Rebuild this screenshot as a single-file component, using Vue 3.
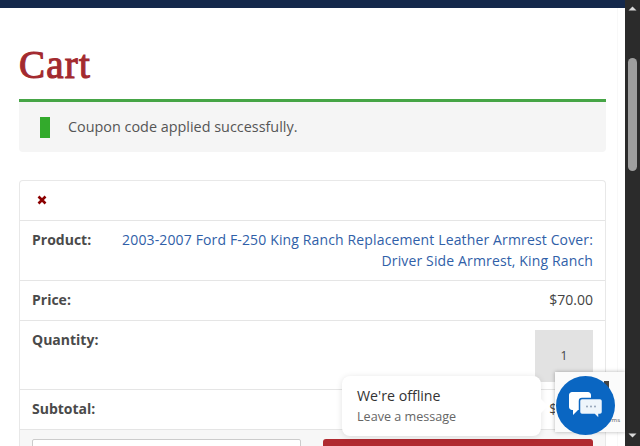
<script setup>
const rows = [
  { label: 'Price:', value: '$70.00' },
]
</script>

<template>
  <div class="page">
    <div class="main">
      <div class="topbar"></div>
      <div class="content">
        <h1 class="title">Cart</h1>
        <div class="notice">
          <span class="notice-icon"></span>
          <span class="notice-text">Coupon code applied successfully.</span>
        </div>
        <div class="table">
          <div class="row row-remove">
            <svg width="10" height="10" viewBox="0 0 10 10"><path d="M1.5 1.5 8.5 8.5M8.5 1.5 1.5 8.5" stroke="#8b0000" stroke-width="2.6" fill="none"/></svg>
          </div>
          <div class="row row-product">
            <strong>Product:</strong>
            <a class="link">2003-2007 Ford F-250 King Ranch Replacement Leather Armrest Cover: Driver Side Armrest, King Ranch</a>
          </div>
          <div v-for="r in rows" :key="r.label" class="row row-std">
            <strong>{{ r.label }}</strong>
            <span>{{ r.value }}</span>
          </div>
          <div class="row row-qty">
            <strong>Quantity:</strong>
            <div class="qty">1</div>
          </div>
          <div class="row row-std">
            <strong>Subtotal:</strong>
            <span>$70.00</span>
          </div>
          <div class="row row-coupon">
            <div class="coupon-input"></div>
            <div class="coupon-btn"></div>
          </div>
        </div>
      </div>
    </div>
    <div class="scrollbar">
      <svg class="arrow" width="15" height="8" viewBox="0 0 15 8"><path d="M3.5 6.5 7.5 2.5 11.5 6.5Z" fill="#d8d8d8"/></svg>
      <div class="thumb"></div>
      <svg class="arrow arrow-down" width="15" height="8" viewBox="0 0 15 8"><path d="M3.5 1.5 7.5 5.5 11.5 1.5Z" fill="#d8d8d8"/></svg>
    </div>

    <div class="recaptcha"><span class="logo-bit"></span><span class="tm">Terms</span></div>
    <div class="bubble">
      <div class="bubble-title">We're offline</div>
      <div class="bubble-sub">Leave a message</div>
      <span class="bubble-tip"></span>
    </div>
    <div class="chat">
      <svg width="34" height="30" viewBox="0 0 34 30">
        <path d="M3 1H19C20.5 1 22 2.4 22 4V16C22 17.6 20.5 19 19 19H9L4 24V19H3C1.5 19 0 17.6 0 16V4C0 2.4 1.5 1 3 1Z" fill="#fff"/>
        <path d="M13 7.5H31C32.2 7.5 33.5 8.6 33.5 10V21C33.5 22.4 32.2 23.5 31 23.5H30V28L25.5 23.5H13C11.6 23.5 10.5 22.4 10.5 21V10C10.5 8.6 11.6 7.5 13 7.5Z" fill="#eef5fb" stroke="#0a66c2" stroke-width="1.5"/>
        <circle cx="18" cy="15.5" r=".9" fill="#8a9bb0"/>
        <circle cx="22" cy="15.5" r=".9" fill="#8a9bb0"/>
        <circle cx="26" cy="15.5" r=".9" fill="#8a9bb0"/>
      </svg>
    </div>
  </div>
</template>

<style scoped>
.page {
  position: relative;
  display: flex;
  width: 640px;
  height: 446px;
  overflow: hidden;
  background: #fff;
  font-family: "Open Sans", "Liberation Sans", sans-serif;
  font-size: 14px;
  line-height: 21px;
  color: #444;
}
.main { flex: 1; min-width: 0; }
.topbar { height: 8px; background: #14284b; }
.content {
  margin-right: 7px;
  padding: 0 11px 0 19px;
  border-right: 1px solid #f8f8f8;
}
.title {
  margin: 0;
  padding-top: 35px;
  height: 56px;
  font-family: "Liberation Serif", serif;
  font-size: 39px;
  line-height: 44px;
  font-weight: 400;
  letter-spacing: 1.2px;
  -webkit-text-stroke: 1.1px #a32a2f;
  color: #a32a2f;
}
.notice {
  display: flex;
  align-items: center;
  height: 50px;
  border-top: 3px solid #46a546;
  border-radius: 0 0 4px 4px;
  background: #f5f5f5;
  color: #555;
  padding-left: 21px;
  gap: 18px;
}
.notice-text { font-size: 14.4px; position: relative; top: -1px; }
.notice-icon { width: 10px; height: 21px; background: #33aa2c; }
.table {
  margin-top: 28px;
  border: 1px solid #e8e8e8;
  border-bottom: 0;
  border-radius: 4px 4px 0 0;
}
.row {
  display: flex;
  justify-content: space-between;
  padding: 8px 12px;
  border-bottom: 1px solid #e5e5e5;
  box-sizing: border-box;
}
strong { font-weight: 700; color: #4a4a4a; white-space: nowrap; }
.row-remove { height: 40px; padding: 0 12px 2px 17px; align-items: center; }
.row-product { height: 60px; gap: 24px; }
.link { color: #3060a8; text-align: right; letter-spacing: .14px; }
.row-std { height: 40px; }
.row-qty { height: 69px; }
.qty {
  width: 58px;
  height: 52px;
  margin-top: 1px;
  padding-bottom: 2px;
  box-sizing: border-box;
  background: #e2e2e2;
  color: #444;
  font-size: 12px;
  display: flex;
  align-items: center;
  justify-content: center;
}
.row-coupon {
  height: 60px;
  background: #f7f7f7;
  border-bottom: 0;
  padding: 9px 12px;
  gap: 22px;
}
.coupon-input { flex: 0 0 269px; height: 30px; background: #fff; border: 1px solid #ccc; box-sizing: border-box; border-radius: 2px; }
.coupon-btn { flex: 1; height: 30px; background: #b02a30; border-radius: 3px 3px 0 0; }
.scrollbar {
  flex: 0 0 15px;
  background: #2b2b2b;
  position: relative;
  display: flex;
  flex-direction: column;
  align-items: center;
}
.arrow { display: block; margin-top: 4px; flex: none; }
.thumb {
  width: 9px;
  height: 113px;
  margin-top: 46px;
  border-radius: 5px;
  background: #9e9e9e;
}
.arrow-down { margin-top: auto; margin-bottom: 6px; }
.recaptcha {
  position: absolute;
  left: 555px;
  top: 372px;
  width: 70px;
  height: 60px;
  background: #fbfbfb;
  box-shadow: 0 0 4px rgba(0,0,0,.3);
}
.logo-bit {
  position: absolute;
  left: 49px;
  top: 9px;
  width: 5px;
  height: 7px;
  background: #444;
}
.tm { position: absolute; right: 5px; bottom: 8px; font-size: 6px; line-height: 8px; color: #555; }
.bubble {
  position: absolute;
  left: 342px;
  top: 376px;
  width: 199px;
  height: 60px;
  box-sizing: border-box;
  padding: 9px 15px;
  background: #fff;
  border-radius: 8px;
  box-shadow: 0 1px 6px rgba(0,0,0,.12);
}
.bubble-title { font-size: 14.2px; line-height: 22px; color: #333; }
.bubble-sub { font-size: 12.6px; line-height: 20px; color: #666; }
.bubble-tip {
  position: absolute;
  right: -5px;
  top: 25px;
  width: 10px;
  height: 10px;
  background: #fff;
  transform: rotate(45deg);
}
.chat {
  position: absolute;
  left: 556px;
  top: 376px;
  width: 59px;
  height: 59px;
  border-radius: 50%;
  background: #0a66c2;
  display: flex;
  align-items: center;
  justify-content: center;
}
</style>
